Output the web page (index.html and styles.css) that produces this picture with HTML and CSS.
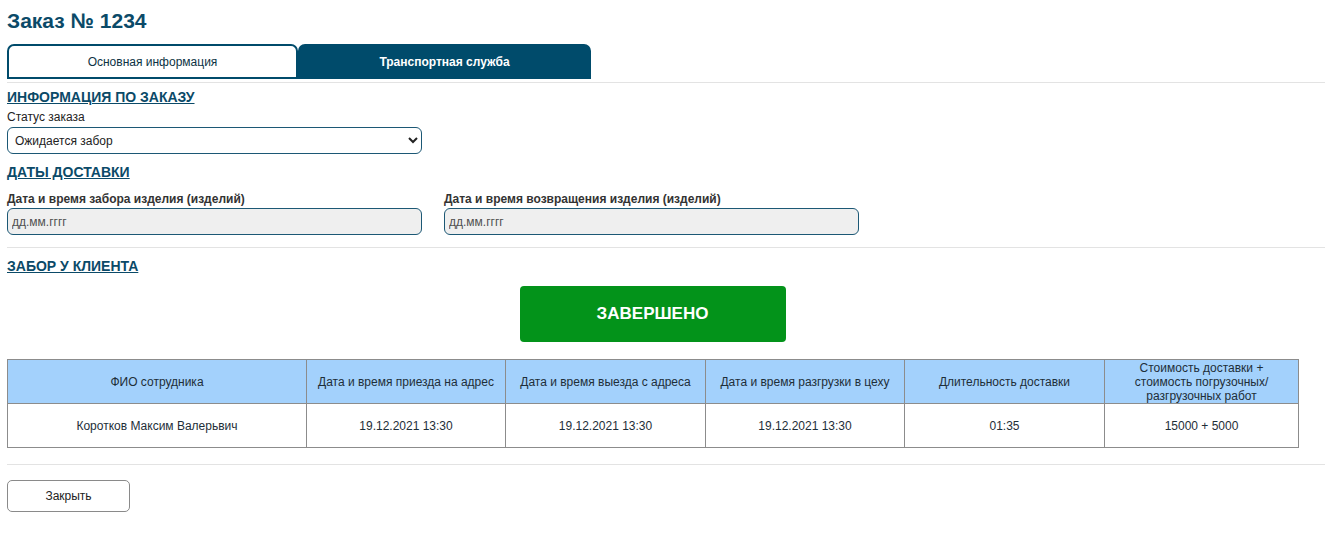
FILE: index.html
```html
<!DOCTYPE html>
<html lang="ru">
<head>
    <meta charset="UTF-8">
    <meta name="viewport" content="width=device-width, initial-scale=1.0">
    <title>Заказ № 1234</title>
    <link rel="stylesheet" href="styles.css">
</head>
<body>

    <h1 class="page-title">Заказ № 1234</h1>

    <!-- вкладки заказа -->
    <div class="tabs">
        <div class="tab">Основная информация</div>
        <div class="tab active">Транспортная служба</div>
    </div>

    <hr class="divider">

    <!-- информация по заказу -->
    <div class="section">
        <h2 class="section-title">ИНФОРМАЦИЯ ПО ЗАКАЗУ</h2>
        <label class="field-label">Статус заказа</label>
        <select class="field-select">
            <option>Ожидается забор</option>
        </select>
    </div>

    <!-- даты доставки -->
    <div class="section">
        <h2 class="section-title">ДАТЫ ДОСТАВКИ</h2>
        <div class="dates">
            <div class="date-field">
                <label class="field-label bold">Дата и время забора изделия (изделий)</label>
                <input class="field-input" type="text" placeholder="дд.мм.гггг">
            </div>
            <div class="date-field">
                <label class="field-label bold">Дата и время возвращения изделия (изделий)</label>
                <input class="field-input" type="text" placeholder="дд.мм.гггг">
            </div>
        </div>
    </div>

    <hr class="divider">

    <!-- забор у клиента -->
    <div class="section">
        <h2 class="section-title pickup">ЗАБОР У КЛИЕНТА</h2>
        <div class="done-wrap">
            <button class="done-btn">ЗАВЕРШЕНО</button>
        </div>
        <table class="pickup-table">
            <colgroup>
                <col style="width: 299px">
                <col style="width: 199px">
                <col style="width: 200px">
                <col style="width: 199px">
                <col style="width: 200px">
                <col style="width: 194px">
            </colgroup>
            <thead>
                <tr>
                    <th>ФИО сотрудника</th>
                    <th>Дата и время приезда на адрес</th>
                    <th>Дата и время выезда с адреса</th>
                    <th>Дата и время разгрузки в цеху</th>
                    <th>Длительность доставки</th>
                    <th class="col-cost">Стоимость доставки + стоимость погрузочных/ разгрузочных работ</th>
                </tr>
            </thead>
            <tbody>
                <tr>
                    <td>Коротков Максим Валерьвич</td>
                    <td>19.12.2021 13:30</td>
                    <td>19.12.2021 13:30</td>
                    <td>19.12.2021 13:30</td>
                    <td>01:35</td>
                    <td>15000 + 5000</td>
                </tr>
            </tbody>
        </table>
    </div>

    <hr class="divider bottom">

    <button class="close-btn">Закрыть</button>

</body>
</html>
```

FILE: styles.css
```css
* {
    margin: 0;
    padding: 0;
    box-sizing: border-box;
}
body {
    font-family: "Liberation Sans", Arial, sans-serif;
    background-color: #fff;
    color: #222;
    padding: 9px 0 0 7px;
}
.page-title {
    font-size: 21px;
    font-weight: bold;
    color: #0b4a68;
    line-height: 23px;
}
.tabs {
    display: flex;
    margin-top: 12px;
}
.tab {
    width: 291px;
    height: 35px;
    border: 2px solid #004b6b;
    border-radius: 7px 7px 0 0;
    display: flex;
    align-items: center;
    justify-content: center;
    font-size: 12px;
    color: #0d3344;
}
.tab.active {
    width: 293px;
    background-color: #004b6b;
    color: #fff;
    font-weight: bold;
}
.divider {
    border: none;
    border-top: 1px solid #e3e3e3;
    margin: 3px 0 0 0;
}
.section-title {
    font-size: 14px;
    font-weight: bold;
    color: #0b4a68;
    text-decoration: underline;
    line-height: 16px;
    margin: 6px 0 5px 0;
}
.section-title.pickup {
    margin-top: 10px;
    margin-bottom: 12px;
}
.field-label {
    display: block;
    font-size: 12px;
    line-height: 14px;
    color: #222;
    margin-bottom: 3px;
}
.field-label.bold {
    font-weight: bold;
    color: #333;
    margin-bottom: 2px;
}
.field-select {
    width: 415px;
    height: 27px;
    border: 1px solid #1c5875;
    border-radius: 6px;
    font-family: inherit;
    font-size: 12px;
    color: #222;
    padding: 0 3px;
    background-color: #fff;
    margin-bottom: 4px;
}
.dates {
    display: flex;
    gap: 22px;
    margin-top: 12px;
}
.field-input {
    width: 415px;
    height: 27px;
    border: 1px solid #1c5875;
    border-radius: 6px;
    background-color: #efefef;
    font-family: inherit;
    font-size: 12px;
    padding: 0 4px;
    margin-bottom: 9px;
}
.field-input::placeholder {
    color: #505050;
}
.done-wrap {
    display: flex;
    justify-content: center;
    width: 1291px;
    margin-top: 9px;
}
.done-btn {
    width: 266px;
    height: 56px;
    background-color: #03931a;
    border: none;
    border-radius: 4px;
    color: #fff;
    font-family: inherit;
    font-size: 17px;
    font-weight: bold;
}
.pickup-table {
    width: 1291px;
    margin-top: 17px;
    border-collapse: collapse;
    table-layout: fixed;
    font-size: 12px;
    color: #1e2e38;
}
.pickup-table th,
.pickup-table td {
    border: 1px solid #8c8c8c;
    text-align: center;
    padding: 0 6px;
}
.pickup-table th {
    background-color: #a3d1fc;
    font-weight: normal;
    height: 44px;
    line-height: 14px;
}
.pickup-table th.col-cost {
    padding: 0 20px;
}
.pickup-table td {
    height: 44px;
}
.pickup-table thead tr {
    border-top: 1px solid #bdbdbd;
}
.divider.bottom {
    margin-top: 16px;
}
.close-btn {
    margin-top: 15px;
    width: 123px;
    height: 32px;
    background-color: #fff;
    border: 1px solid #8a8a8a;
    border-radius: 5px;
    font-family: inherit;
    font-size: 12px;
    color: #222;
}
```
